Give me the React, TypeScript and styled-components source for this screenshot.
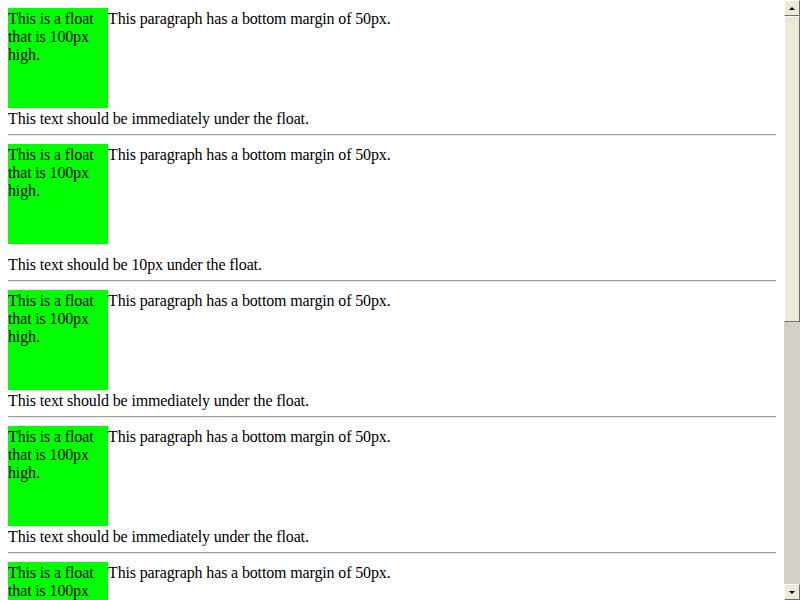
import React from "react";
import styled, { createGlobalStyle } from "styled-components";

const sections = [
  { under: "This text should be immediately under the float.", gap: 0 },
  { under: "This text should be 10px under the float.", gap: 10 },
  { under: "This text should be immediately under the float.", gap: 0 },
  { under: "This text should be immediately under the float.", gap: 0 },
  { under: "This text should be immediately under the float.", gap: 0 },
];

export default function App() {
  return (
    <>
      <GlobalStyle />
      <Window>
        <Page>
          {sections.map((s, i) => (
            <Section key={i}>
              <FloatRow>
                <FloatBox>This is a float that is 100px high.</FloatBox>
                <Para>This paragraph has a bottom margin of 50px.</Para>
              </FloatRow>
              <Under $gap={s.gap}>{s.under}</Under>
              {i < sections.length - 1 && <Rule />}
            </Section>
          ))}
        </Page>
        <ScrollBar>
          <ArrowButton>
            <Triangle $up />
          </ArrowButton>
          <Track>
            <Thumb />
          </Track>
          <ArrowButton>
            <Triangle />
          </ArrowButton>
        </ScrollBar>
      </Window>
    </>
  );
}

const GlobalStyle = createGlobalStyle`
  html, body {
    margin: 0;
    padding: 0;
    background: #ffffff;
  }
  body {
    font-family: "Liberation Serif", "Times New Roman", serif;
    font-size: 16px;
    line-height: 18px;
    letter-spacing: -0.14px;
    color: #000000;
  }
`;

const Window = styled.div`
  display: flex;
  width: 800px;
  height: 600px;
  overflow: hidden;
`;

const Page = styled.div`
  flex: 1;
  padding: 8px 8px 0 8px;
  overflow: hidden;
`;

const Section = styled.div`
  display: flex;
  flex-direction: column;
`;

const FloatRow = styled.div`
  display: flex;
  align-items: flex-start;
`;

const FloatBox = styled.div`
  width: 100px;
  height: 100px;
  box-sizing: border-box;
  padding-top: 2px;
  background: #00ff00;
  flex-shrink: 0;
`;

const Para = styled.p`
  margin: 0;
  padding-top: 2px;
`;

const Under = styled.div<{ $gap: number }>`
  margin-top: ${(p) => p.$gap}px;
  height: 18px;
  box-sizing: border-box;
  padding-top: 2px;
  white-space: nowrap;
`;

const Rule = styled.hr`
  margin: 8px 0;
  height: 0;
  border: none;
  border-top: 1px solid #a0a0a0;
  border-bottom: 1px solid #e8e8e8;
`;

const ScrollBar = styled.div`
  width: 16px;
  height: 600px;
  display: flex;
  flex-direction: column;
  background: #d4d0c8;
`;

const ArrowButton = styled.div`
  width: 16px;
  height: 16px;
  box-sizing: border-box;
  background: #ece9d8;
  border-top: 1px solid #ffffff;
  border-left: 1px solid #ffffff;
  border-right: 1px solid #716f64;
  border-bottom: 1px solid #716f64;
  display: flex;
  align-items: center;
  justify-content: center;
`;

const Triangle = styled.div<{ $up?: boolean }>`
  width: 0;
  height: 0;
  border-left: 3px solid transparent;
  border-right: 3px solid transparent;
  ${(p) =>
    p.$up
      ? "border-bottom: 3px solid #000000;"
      : "border-top: 3px solid #000000;"}
`;

const Track = styled.div`
  flex: 1;
  background: #d4d0c8;
`;

const Thumb = styled.div`
  width: 16px;
  height: 306px;
  box-sizing: border-box;
  background: #ece9d8;
  border-top: 1px solid #ffffff;
  border-left: 1px solid #ffffff;
  border-right: 1px solid #716f64;
  border-bottom: 1px solid #716f64;
`;
